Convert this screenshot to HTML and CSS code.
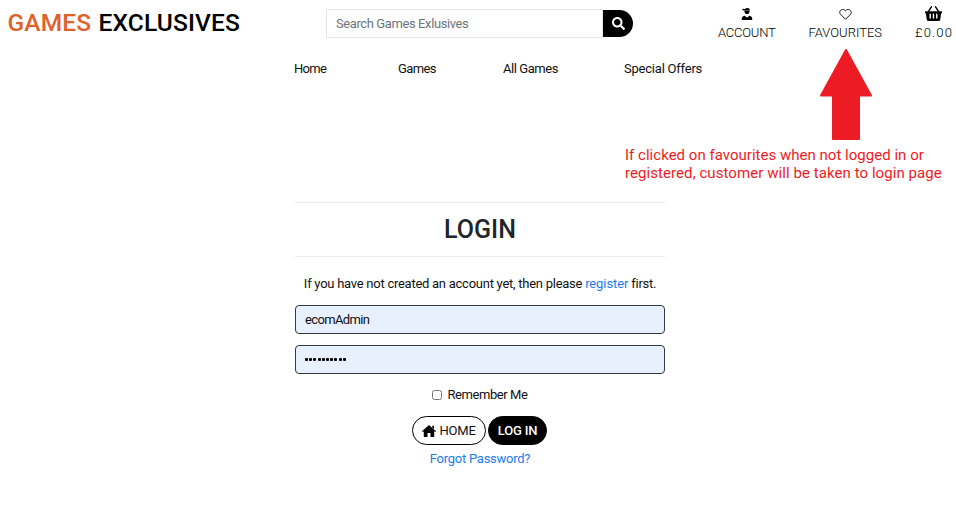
FILE: index.html
```html
<!DOCTYPE html>
<html lang="en">
<head>
<meta charset="utf-8">
<title>Games Exclusives - Login</title>
<link rel="stylesheet" href="styles.css">
</head>
<body>
<header class="header">
  <a class="logo"><span class="logo-accent">GAMES</span> <span class="logo-main">EXCLUSIVES</span></a>
  <form class="search">
    <input class="search-input" type="text" placeholder="Search Games Exlusives">
    <button class="search-button" type="button" aria-label="Search"><svg width="13" height="13" viewBox="0 0 512 512" fill="currentColor"><path d="M505 442.700 405.300 343c-4.500-4.500-10.600-7-17-7H372c27.600-35.300 44-79.700 44-128C416 93.100 322.900 0 208 0S0 93.100 0 208s93.100 208 208 208c48.300 0 92.700-16.400 128-44v16.300c0 6.400 2.500 12.500 7 17l99.700 99.700c9.400 9.400 24.600 9.400 33.900 0l28.300-28.300c9.400-9.400 9.400-24.600.1-34zM208 336c-70.700 0-128-57.200-128-128 0-70.700 57.200-128 128-128 70.700 0 128 57.200 128 128 0 70.700-57.200 128-128 128z"/></svg></button>
  </form>
  <div class="actions">
    <a class="action account"><svg width="12" height="14" viewBox="0 0 12 14"><path d="M1.500 2.200 4 2.400Q6 .8 8.600 2.200V4.700Q8.200 7.600 6 7.600T3.400 4.700V3.700L1.500 3.900Z"/><path d="M3.200 3.900H8.800" stroke="#999" stroke-width=".6"/><path d="M.7 13.500Q.6 9.700 3.400 9.300L6 10.900 8.600 9.300Q11.400 9.700 11.300 13.500Z"/></svg><span>ACCOUNT</span></a>
    <a class="action favourites"><svg width="13" height="14" viewBox="0 0 13 14"><path d="M6.500 12.800 1.500 7.800C-1 4.800 3.300.8 6.500 4.300 9.700.8 14 4.800 11.500 7.800Z" fill="none" stroke="#111" stroke-width="1" stroke-linejoin="round"/></svg><span>FAVOURITES</span></a>
    <a class="action basket"><svg width="17" height="15" viewBox="0 32 576 448" preserveAspectRatio="none"><path d="M576 216v16c0 13.300-10.700 24-24 24h-8l-26.100 182.800C514.500 462.400 494.300 480 470.400 480H105.600c-23.900 0-44.100-17.600-47.500-41.200L32 256h-8c-13.300 0-24-10.700-24-24v-16c0-13.300 10.700-24 24-24h67.300L198.600 44.500c7.800-10.700 22.800-13.100 33.500-5.300 10.700 7.800 13.100 22.800 5.300 33.500L150.600 192h274.700L338.600 72.700c-7.800-10.700-5.400-25.700 5.300-33.500 10.700-7.800 25.700-5.400 33.500 5.300L484.700 192H552c13.300 0 24 10.700 24 24zM312 392V280c0-13.300-10.700-24-24-24s-24 10.700-24 24v112c0 13.300 10.700 24 24 24s24-10.700 24-24zm112 0V280c0-13.300-10.700-24-24-24s-24 10.700-24 24v112c0 13.300 10.700 24 24 24s24-10.700 24-24zm-224 0V280c0-13.300-10.700-24-24-24s-24 10.700-24 24v112c0 13.300 10.700 24 24 24s24-10.700 24-24z"/></svg><span>£0.00</span></a>
  </div>
</header>
<nav class="nav"><a class="nav-home">Home</a><a class="nav-games">Games</a><a class="nav-all">All Games</a><a class="nav-offers">Special Offers</a></nav>
<aside class="note">
  <svg class="arrow" width="54" height="93" viewBox="0 0 54 93"><path d="M27 2 52 47.500H40V91H14V47.500H2Z" fill="#ed1c24" stroke="#ed1c24" stroke-width="2" stroke-linejoin="round"/></svg>
  <p class="note-text">If clicked on favourites when not logged in or<br><span class="note-second">registered, customer will be taken to login page</span></p>
</aside>
<main class="login">
  <h1 class="title">LOGIN</h1>
  <p class="intro">If you have not created an account yet, then please <a class="link">register</a> first.</p>
  <div class="field username">ecomAdmin</div>
  <div class="field password"><i></i><i></i><i></i><i></i><i></i><i></i><i></i><i></i><i></i><i></i></div>
  <label class="remember"><input type="checkbox"><span>Remember Me</span></label>
  <div class="buttons">
    <a class="button home"><svg width="14" height="12" viewBox="0 0 14 12"><path d="M7 0 14 6.200 13.200 7.100 12.200 6.300V11.400Q12.200 12 11.600 12H8.500V8H5.500V12H2.400Q1.800 12 1.800 11.400V6.300L.8 7.100 0 6.200ZM10.300.8H12V4L10.300 2.500Z"/></svg><span>HOME</span></a>
    <a class="button submit"><span>LOG IN</span></a>
  </div>
  <a class="link forgot">Forgot Password?</a>
</main>
</body>
</html>
```
FILE: styles.css
```css
* { box-sizing: border-box; }
body { margin: 0; background: #fff; color: #111; font: 13px/18px Roboto, "Liberation Sans", sans-serif; height: 517px; overflow: hidden; }
svg { display: block; flex: none; }
.header { display: grid; grid-template-columns: 326px 308px 1fr; height: 48px; }
.logo { padding: 9px 0 0 7.500px; font-size: 24.500px; line-height: 28px; font-weight: 500; color: #000; white-space: nowrap; word-spacing: 1px; letter-spacing: .15px; }
.logo-accent { color: #df622d; }
.search { display: flex; margin: 9px 0 0; height: 29px; }
.search-input { width: 277px; height: 29px; border: 1px solid #e5e5e5; padding: 0 9px; font: inherit; letter-spacing: -.4px; outline: none; }
.search-input::placeholder { color: #6c757d; opacity: 1; }
.search-button { width: 30px; height: 27px; margin-top: 1px; padding: 0 0 0 1px; border: 0; border-radius: 0 14px 14px 0; background: #000; color: #fff; display: flex; align-items: center; justify-content: center; }
.actions { display: flex; padding: 6px 4px 0 0; justify-content: flex-end; gap: 33px; }
.action { display: flex; flex-direction: column; align-items: center; white-space: nowrap; font-weight: 300; color: #000; }
.action svg { height: 15px; margin-bottom: 3px; }
.account { letter-spacing: -.22px; }
.basket { letter-spacing: 1.150px; }
.basket span { margin-right: -1px; }
.nav { display: grid; grid-template-columns: 104px 105px 121px 90px; padding: 12px 0 0 294px; white-space: nowrap; }
.nav-home { letter-spacing: -.7px; }
.nav-games { letter-spacing: -.6px; }
.nav-all { letter-spacing: -.45px; }
.nav-offers { letter-spacing: -.22px; }
.note { position: absolute; left: 625px; top: 48px; width: 325px; color: #ed1c24; }
.arrow { margin-left: 194px; }
.note-text { margin: 5px 0 0; font-size: 15px; line-height: 18px; white-space: nowrap; letter-spacing: .02px; }
.note-second { letter-spacing: .07px; }
.login { width: 370px; margin: 124px 0 0 295px; display: flex; flex-direction: column; align-items: center; }
.title { width: 370px; height: 55px; margin: 0; border: solid #ebebeb; border-width: 1px 0; text-align: center; font-size: 25px; line-height: 53px; font-weight: 500; color: #212529; }
.intro { margin: 18px 0 12px; white-space: nowrap; letter-spacing: -.26px; }
.link { color: #1b7bee; }
.intro .link { letter-spacing: -.1px; }
.field { width: 370px; height: 29px; margin-bottom: 11px; padding: 0 9px; border: 1px solid #343a40; border-radius: 4px; background: #e8f0fe; line-height: 27px; }
.username { letter-spacing: -.65px; }
.password { display: flex; align-items: center; gap: 1.200px; }
.password i { width: 3px; height: 3px; border-radius: 1px; background: #000; }
.remember { display: flex; align-items: center; gap: 5px; height: 18px; margin-top: 1px; letter-spacing: -.42px; }
.remember input { width: 10px; height: 10px; margin: 0; }
.buttons { display: flex; gap: 2px; margin: 12px 1px 0 0; }
.button { height: 29px; border: 1px solid #000; border-radius: 15px; display: flex; align-items: center; justify-content: center; gap: 3px; }
.home { width: 74px; letter-spacing: -.2px; }
.submit { width: 59px; background: #000; color: #fff; font-weight: 500; letter-spacing: -.2px; }
.forgot { margin-top: 5px; letter-spacing: -.25px; }
```
